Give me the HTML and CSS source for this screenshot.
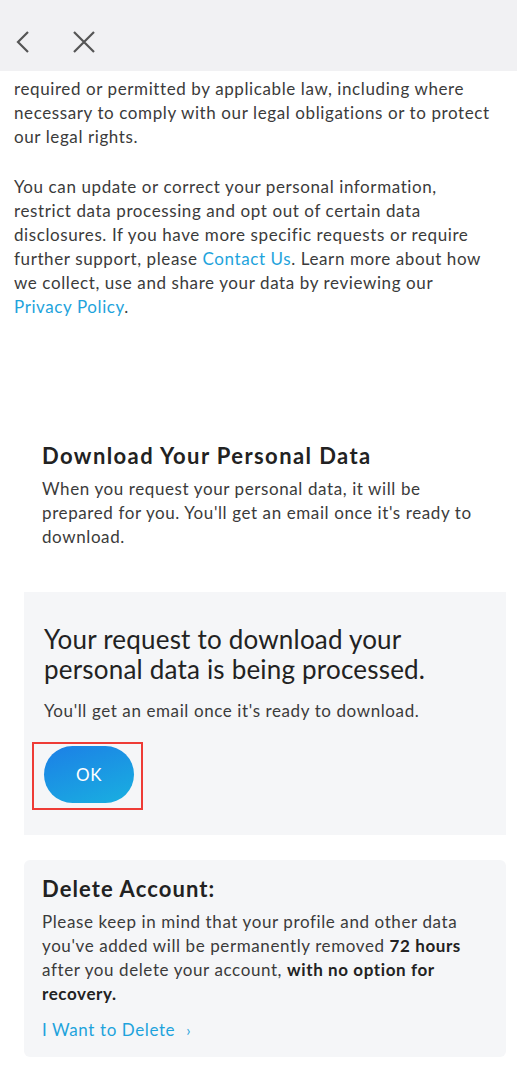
FILE: index.html
```html
<!DOCTYPE html>
<html lang="en">
  <head>
    <meta charset="UTF-8" />
    <meta name="viewport" content="width=device-width, initial-scale=1.0" />
    <title>Privacy Settings</title>
    <link rel="stylesheet" href="styles.css">
  </head>
  <body>
    <header class="topbar">
      <button class="icon-btn" aria-label="Back">
        <svg width="16" height="24" viewBox="0 0 16 24"><path d="M13 2 L3 12 L13 22" fill="none" stroke="#555" stroke-width="2.2"/></svg>
      </button>
      <button class="icon-btn" aria-label="Close">
        <svg width="24" height="24" viewBox="0 0 24 24"><path d="M2 2 L22 22 M22 2 L2 22" fill="none" stroke="#555" stroke-width="2.2"/></svg>
      </button>
    </header>

    <main class="content">
      <p class="text intro">
        required or permitted by applicable law, including where necessary to comply with our legal obligations or to protect our legal rights.
      </p>
      <p class="text intro">
        You can update or correct your personal information, restrict data processing and opt out of certain data disclosures. If you have more specific requests or require further support, please <a href="#" class="link">Contact Us</a>. Learn more about how we collect, use and share your data by reviewing our <a href="#" class="link">Privacy Policy</a>.
      </p>

      <section class="download">
        <h2 class="section-title">Download Your Personal Data</h2>
        <p class="text">When you request your personal data, it will be prepared for you. You'll get an email once it's ready to download.</p>
      </section>

      <section class="panel status">
        <h3 class="status-title">Your request to download your personal data is being processed.</h3>
        <p class="status-sub">You'll get an email once it's ready to download.</p>
        <div class="highlight">
          <button class="ok-btn">OK</button>
        </div>
      </section>

      <section class="panel delete">
        <h2 class="section-title delete-title">Delete Account:</h2>
        <p class="text">Please keep in mind that your profile and other data you've added will be permanently removed <b>72 hours</b> after you delete your account, <b>with no option for recovery.</b></p>
        <a href="#" class="link delete-link">I Want to Delete <span class="arrow">›</span></a>
      </section>
    </main>
  </body>
</html>
```

FILE: styles.css
```css
body {
  margin: 0;
  padding: 0;
  font-family: "Lato", "Noto Sans", sans-serif;
  letter-spacing: 0.6px;
  background-color: #fff;
  color: #3b3b3b;
}

.topbar {
  height: 71px;
  background-color: #f1f1f3;
  display: flex;
  align-items: center;
  gap: 41px;
  padding: 12px 0 0 15px;
  box-sizing: border-box;
}

.icon-btn {
  background: none;
  border: none;
  padding: 0;
  display: flex;
  cursor: pointer;
}

.content {
  padding: 6px 11px 22px 14px;
}

.text {
  font-size: 17px;
  line-height: 24px;
  margin: 0 0 26px;
}

.intro {
  margin-right: 12px;
}

.link {
  color: #1ea3dc;
  text-decoration: none;
}

.download {
  padding: 97px 14px 0 28px;
}

.download .text {
  margin: 7px 0 0;
}

.section-title {
  font-size: 22px;
  line-height: 28px;
  font-weight: 700;
  letter-spacing: 1.4px;
  color: #222;
  margin: 0;
}

.panel {
  margin: 43px 0 0 10px;
  background-color: #f5f6f8;
}

.status {
  padding: 32px 20px 25px;
}

.status-title {
  font-size: 26px;
  line-height: 30px;
  font-weight: 400;
  letter-spacing: 0.2px;
  color: #222;
  margin: 0;
}

.status-sub {
  font-size: 17px;
  line-height: 22px;
  letter-spacing: 0.6px;
  margin: 16px 0 0;
}

.highlight {
  display: inline-block;
  margin: 20px 0 0 -12px;
  padding: 2px 7px 5px 10px;
  border: 2px solid #ee3b36;
}

.ok-btn {
  display: block;
  width: 90px;
  height: 57px;
  border: none;
  border-radius: 29px;
  background: linear-gradient(160deg, #1c7fe6, #19b0e0);
  color: #fff;
  font-family: inherit;
  font-size: 17px;
  letter-spacing: 0.6px;
  cursor: pointer;
}

.delete {
  margin-top: 25px;
  border-radius: 6px;
  padding: 15px 18px 15px;
}

.delete-title {
  letter-spacing: 1.1px;
}

.delete .text {
  margin: 7px 0 12px;
}

.delete b {
  color: #222;
}

.delete-link {
  font-size: 17px;
  line-height: 24px;
  display: inline-block;
}

.arrow {
  margin-left: 6px;
  font-size: 15px;
}
```
